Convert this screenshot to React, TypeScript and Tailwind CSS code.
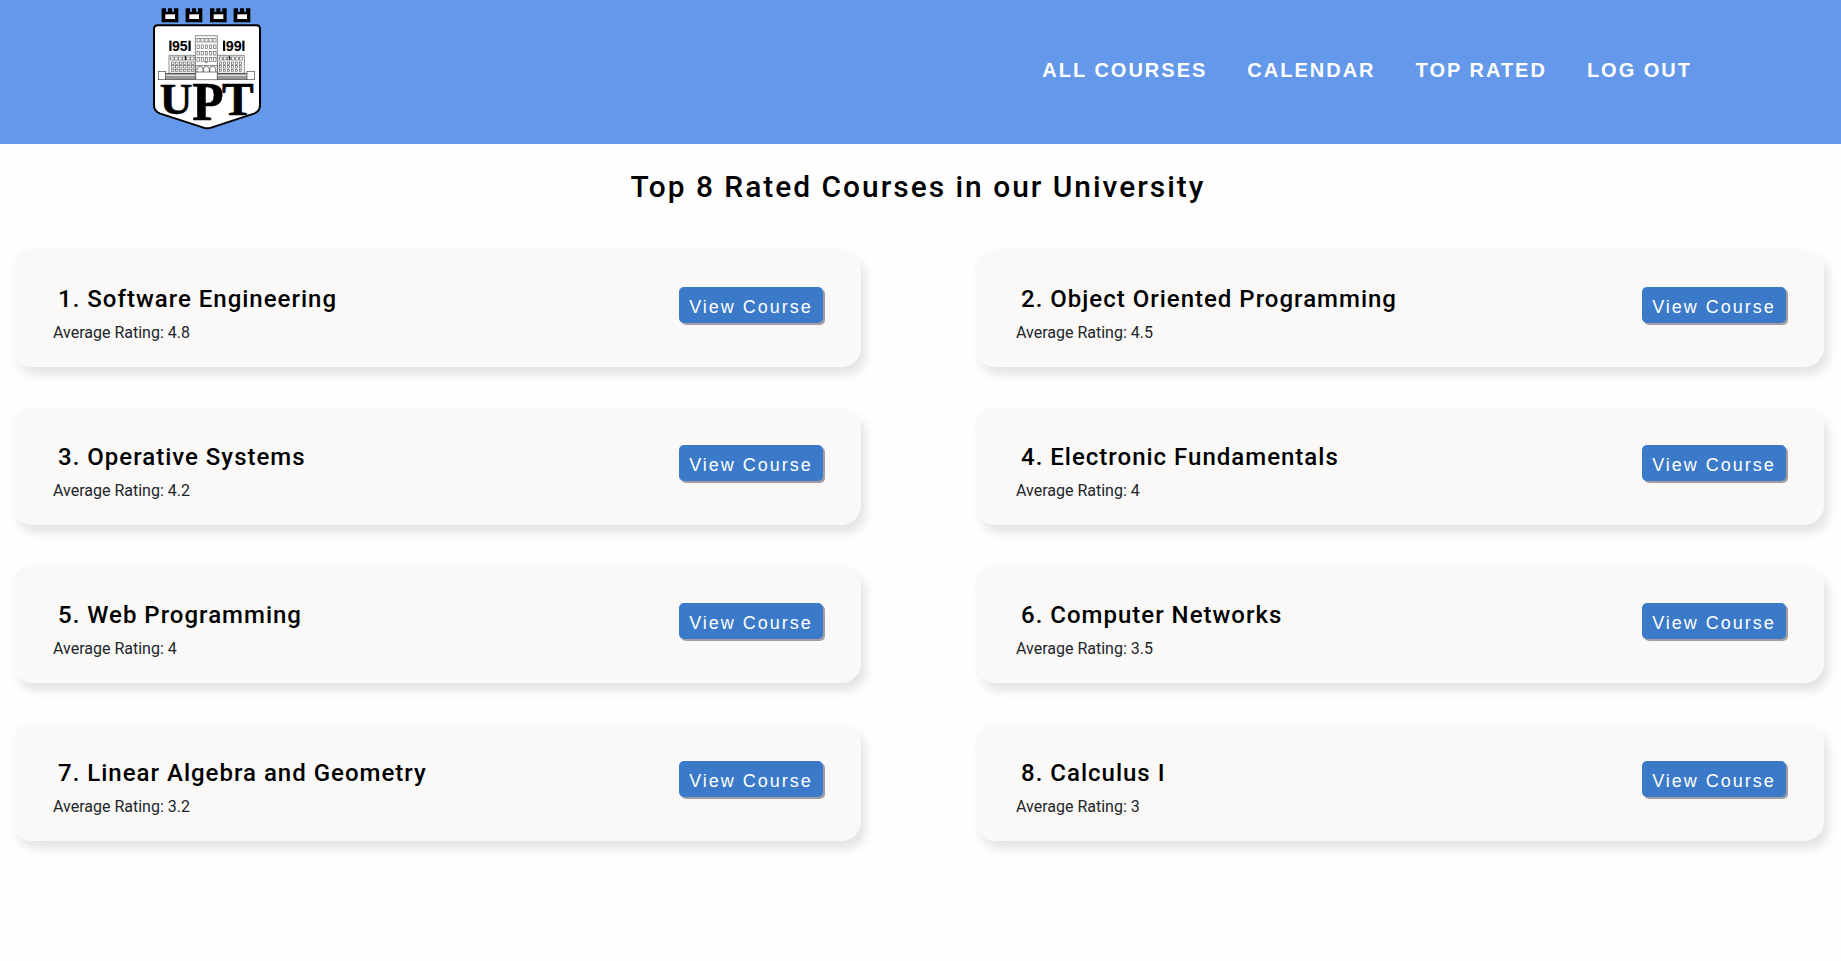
import React from "react";

type Course = { name: string; rating: string };

const courses: Course[] = [
  { name: "Software Engineering", rating: "4.8" },
  { name: "Object Oriented Programming", rating: "4.5" },
  { name: "Operative Systems", rating: "4.2" },
  { name: "Electronic Fundamentals", rating: "4" },
  { name: "Web Programming", rating: "4" },
  { name: "Computer Networks", rating: "3.5" },
  { name: "Linear Algebra and Geometry", rating: "3.2" },
  { name: "Calculus I", rating: "3" },
];

const links = ["ALL COURSES", "CALENDAR", "TOP RATED", "LOG OUT"];

type WindowsProps = { x: number; y: number; cols: number; rows: number; dx: number; dy: number; w: number; h: number };

function Windows({ x, y, cols, rows, dx, dy, w, h }: WindowsProps) {
  return (
    <g fill="#fff" stroke="#555" strokeWidth="1.8">
      {Array.from({ length: cols * rows }, (_, i) => (
        <rect key={i} x={x + (i % cols) * dx} y={y + Math.floor(i / cols) * dy} width={w} height={h} />
      ))}
    </g>
  );
}

function Logo() {
  return (
    <svg className="h-[150px] w-[140px] shrink-0" viewBox="0 0 420 450" aria-label="UPT">
      {[65, 137, 210, 281].map((x) => (
        <g key={x}>
          <path d={`M${x} 25h13v10h6v-10h12v10h6v-10h13v42h-50z`} fill="#000" />
          <path d={`M${x + 11} 43h29v14h-29z`} fill="#fff" />
        </g>
      ))}
      <path
        d="M53 76H350Q360 76 360 87V316Q360 334 342 341L216 382Q202 388 188 382L61 341Q42 334 42 316V87Q42 76 53 76Z"
        fill="#fff"
        stroke="#000"
        strokeWidth="6"
      />
      <g fontFamily="Liberation Sans, sans-serif" fontWeight="700" fontSize="43" fill="#000">
        <text x="96" y="152" textLength="47" lengthAdjust="spacingAndGlyphs">
          95
        </text>
        <text x="257" y="152" textLength="48" lengthAdjust="spacingAndGlyphs">
          99
        </text>
      </g>
      <g fill="#000">
        <rect x="88" y="122" width="6.5" height="31" />
        <rect x="145.5" y="122" width="6.5" height="31" />
        <rect x="249" y="122" width="6.5" height="31" />
        <rect x="307" y="122" width="6.5" height="31" />
      </g>
      <g fill="#fff" stroke="#555" strokeWidth="2">
        <path d="M87 220V166H166V220Z" />
        <path d="M233 220V166H313V220Z" />
        <path d="M166 215V107H232V215Z" />
      </g>
      <Windows x={92} y={171} cols={6} rows={1} dx={12} dy={14} w={10} h={9} />
      <Windows x={95} y={186} cols={6} rows={3} dx={12} dy={11} w={7} h={7} />
      <Windows x={238} y={171} cols={6} rows={1} dx={12} dy={14} w={10} h={9} />
      <Windows x={238} y={186} cols={6} rows={3} dx={12} dy={11} w={7} h={7} />
      <Windows x={171} y={115} cols={5} rows={1} dx={12} dy={20} w={9} h={11} />
      <Windows x={171} y={135} cols={5} rows={3} dx={12.5} dy={19} w={7} h={11} />
      <path d="M136 168v12M268 168v12" stroke="#000" strokeWidth="3" />
      <path d="M192 184q8 9 14 0" fill="none" stroke="#333" strokeWidth="2" />
      <rect x="77" y="220" width="90" height="18" fill="#999" stroke="#333" strokeWidth="2" />
      <rect x="232" y="220" width="90" height="18" fill="#999" stroke="#333" strokeWidth="2" />
      <path d="M77 226h90M232 226h90" stroke="#eee" strokeWidth="3" />
      <g fill="#fff" stroke="#444" strokeWidth="2">
        <rect x="55" y="214" width="22" height="25" />
        <rect x="321" y="214" width="22" height="25" />
        <path d="M167 239V197H232V239Z" />
        <path d="M171 216v-9q1-8 9-8t9 8v9M190 216v-9q1-8 9-8t9 8v9M209 216v-9q1-8 9-8t9 8v9" />
        <path d="M167 216H232" />
      </g>
      <g fontFamily="Liberation Serif, serif" fontWeight="700" fill="#000" stroke="#000" strokeWidth="2">
        <text x="59" y="342" fontSize="135" textLength="98" lengthAdjust="spacingAndGlyphs">
          U
        </text>
        <text x="157" y="361" fontSize="162" textLength="94" lengthAdjust="spacingAndGlyphs">
          P
        </text>
        <text x="246" y="346" fontSize="140" textLength="95" lengthAdjust="spacingAndGlyphs">
          T
        </text>
      </g>
    </svg>
  );
}

function CourseCard({ course, index }: { course: Course; index: number }) {
  return (
    <article className="flex h-[118px] items-start justify-between rounded-[20px] bg-[#faf9f8] pl-[41px] pr-[38px] shadow-[5px_8px_10px_rgba(0,0,0,0.1)]">
      <div className="pt-[34px]">
        <h2 className="pl-[5px] text-2xl leading-8 font-medium tracking-[1px] text-black">
          {index + 1}. {course.name}
        </h2>
        <p className="mt-1.5 text-base leading-6 text-[#212529]">Average Rating: {course.rating}</p>
      </div>
      <button className="mt-[38px] h-9 w-36 rounded-[5px] bg-[#3a7ac8] pt-1 text-center font-['Liberation_Sans',sans-serif] text-lg leading-none tracking-[2px] whitespace-nowrap text-white shadow-[2px_2px_0_#a39ea4]">
        View Course
      </button>
    </article>
  );
}

export default function App() {
  return (
    <div className="min-h-[961px] bg-[#fefefe] font-[Roboto,sans-serif]">
      <header className="flex h-36 items-start justify-between bg-[#6498ea] pr-[149px] pl-[140px]">
        <Logo />
        <nav className="flex gap-10 pt-[55px] font-['Liberation_Sans',sans-serif] text-xl leading-[30px] font-bold tracking-[2px] text-white">
          {links.map((l) => (
            <a key={l} href="#">
              {l}
            </a>
          ))}
        </nav>
      </header>
      <main className="pr-[17px] pl-3">
        <h1 className="pt-[25px] text-center text-[29.92px] leading-9 font-medium tracking-[2px] text-black">
          Top 8 Rated Courses in our University
        </h1>
        <div className="mt-11 grid grid-cols-2 gap-x-[114px] gap-y-10">
          {courses.map((c, i) => (
            <CourseCard key={c.name} course={c} index={i} />
          ))}
        </div>
      </main>
    </div>
  );
}
